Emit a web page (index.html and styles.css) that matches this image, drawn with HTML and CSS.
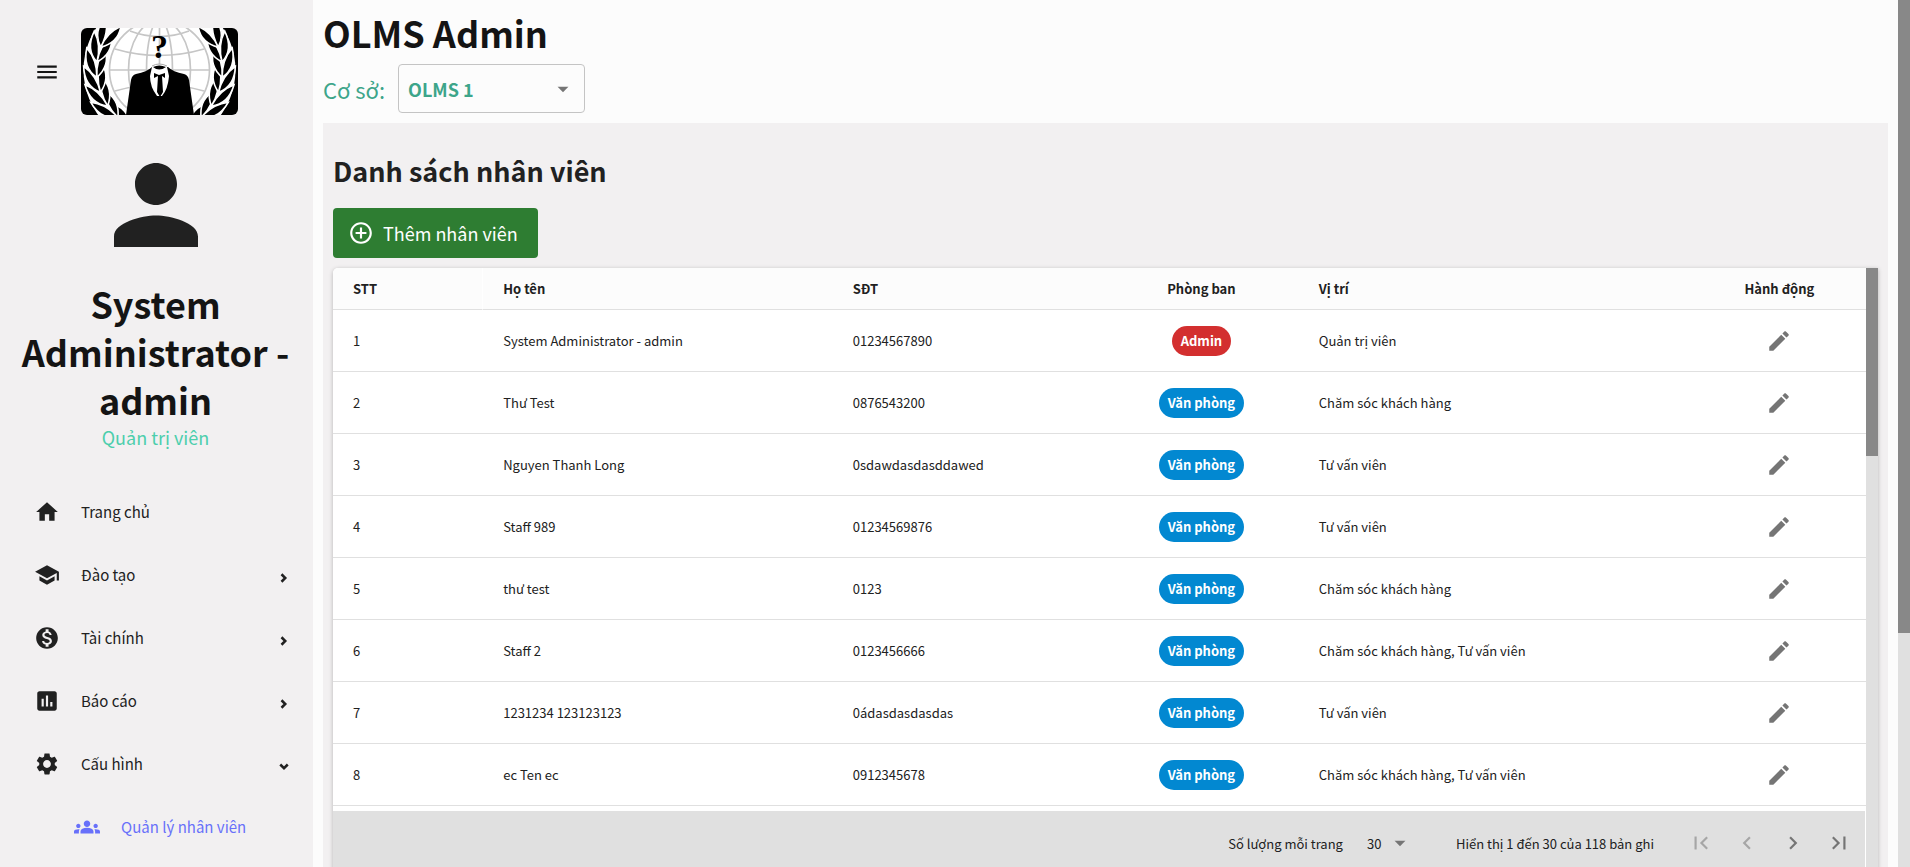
FILE: index.html
```html
<!DOCTYPE html>
<html lang="vi">
<head>
<meta charset="utf-8">
<title>OLMS Admin</title>
<link rel="stylesheet" href="styles.css">
</head>
<body>
<svg class="sprite" aria-hidden="true">
  <symbol id="menu" viewBox="0 0 24 24"><path d="M3 18h18v-2H3v2zm0-5h18v-2H3v2zm0-7v2h18V6H3z"/></symbol>
  <symbol id="person" viewBox="0 0 24 24"><path d="M12 12c2.21 0 4-1.79 4-4s-1.79-4-4-4-4 1.79-4 4 1.79 4 4 4zm0 2c-2.67 0-8 1.34-8 4v2h16v-2c0-2.66-5.33-4-8-4z"/></symbol>
  <symbol id="home" viewBox="0 0 24 24"><path d="M10 20v-6h4v6h5v-8h3L12 3 2 12h3v8z"/></symbol>
  <symbol id="school" viewBox="0 0 24 24"><path d="M5 13.18v4L12 21l7-3.82v-4L12 17l-7-3.82zM12 3 1 9l11 6 9-4.91V17h2V9L12 3z"/></symbol>
  <symbol id="money" viewBox="0 0 24 24"><path d="M12 2C6.48 2 2 6.48 2 12s4.48 10 10 10 10-4.48 10-10S17.52 2 12 2zm1.41 16.09V20h-2.67v-1.93c-1.71-.36-3.16-1.46-3.27-3.4h1.96c.1 1.05.82 1.87 2.65 1.87 1.96 0 2.4-.98 2.4-1.59 0-.83-.44-1.61-2.67-2.14-2.48-.6-4.18-1.62-4.18-3.67 0-1.72 1.39-2.84 3.11-3.21V4h2.67v1.95c1.86.45 2.79 1.86 2.85 3.39H14.3c-.05-1.11-.64-1.87-2.22-1.87-1.5 0-2.4.68-2.4 1.64 0 .84.65 1.39 2.67 1.91s4.18 1.39 4.18 3.91c-.01 1.83-1.38 2.83-3.12 3.16z"/></symbol>
  <symbol id="chart" viewBox="0 0 24 24"><path d="M19 3H5c-1.1 0-2 .9-2 2v14c0 1.1.9 2 2 2h14c1.1 0 2-.9 2-2V5c0-1.1-.9-2-2-2zM9 17H7v-7h2v7zm4 0h-2V7h2v10zm4 0h-2v-4h2v4z"/></symbol>
  <symbol id="gear" viewBox="0 0 24 24"><path d="M19.14 12.94c.04-.3.06-.61.06-.94 0-.32-.02-.64-.07-.94l2.03-1.58c.18-.14.23-.41.12-.61l-1.92-3.32c-.12-.22-.37-.29-.59-.22l-2.39.96c-.5-.38-1.03-.7-1.62-.94l-.36-2.54c-.04-.24-.24-.41-.48-.41h-3.84c-.24 0-.43.17-.47.41l-.36 2.54c-.59.24-1.13.57-1.62.94l-2.39-.96c-.22-.08-.47 0-.59.22L2.74 8.87c-.12.21-.08.47.12.61l2.03 1.58c-.05.3-.09.63-.09.94s.02.64.07.94l-2.03 1.58c-.18.14-.23.41-.12.61l1.92 3.32c.12.22.37.29.59.22l2.39-.96c.5.38 1.03.7 1.62.94l.36 2.54c.05.24.24.41.48.41h3.84c.24 0 .44-.17.47-.41l.36-2.54c.59-.24 1.13-.56 1.62-.94l2.39.96c.22.08.47 0 .59-.22l1.92-3.32c.12-.22.07-.47-.12-.61l-2.01-1.58zM12 15.6c-1.98 0-3.6-1.62-3.6-3.6s1.62-3.6 3.6-3.6 3.6 1.62 3.6 3.6-1.62 3.6-3.6 3.6z"/></symbol>
  <symbol id="groups" viewBox="0 0 24 24"><path d="M12 12.75c1.63 0 3.07.39 4.24.9 1.08.48 1.76 1.56 1.76 2.73V18H6v-1.61c0-1.18.68-2.26 1.76-2.73 1.17-.52 2.61-.91 4.24-.91zM4 13c1.1 0 2-.9 2-2s-.9-2-2-2-2 .9-2 2 .9 2 2 2zm1.13 1.1c-.37-.06-.74-.1-1.13-.1-.99 0-1.93.21-2.78.58C.48 14.9 0 15.62 0 16.43V18h4.5v-1.61c0-.83.23-1.61.63-2.29zM20 13c1.1 0 2-.9 2-2s-.9-2-2-2-2 .9-2 2 .9 2 2 2zm4 3.43c0-.81-.48-1.53-1.22-1.85-.85-.37-1.79-.58-2.78-.58-.39 0-.76.04-1.13.1.4.68.63 1.46.63 2.29V18H24v-1.57zM12 6c1.66 0 3 1.34 3 3s-1.34 3-3 3-3-1.34-3-3 1.34-3 3-3z"/></symbol>
  <symbol id="add" viewBox="0 0 24 24"><path d="M13 7h-2v4H7v2h4v4h2v-4h4v-2h-4V7zm-1-5C6.48 2 2 6.48 2 12s4.48 10 10 10 10-4.48 10-10S17.52 2 12 2zm0 18c-4.41 0-8-3.59-8-8s3.59-8 8-8 8 3.59 8 8-3.59 8-8 8z"/></symbol>
  <symbol id="edit" viewBox="0 0 24 24"><path d="M3 17.25V21h3.75L17.81 9.94l-3.75-3.75L3 17.25zM20.71 7.04c.39-.39.39-1.02 0-1.41l-2.34-2.34c-.39-.39-1.02-.39-1.41 0l-1.83 1.83 3.75 3.75 1.83-1.83z"/></symbol>
  <symbol id="caret" viewBox="0 0 24 24"><path d="m7 10 5 5 5-5z"/></symbol>
  <symbol id="chevron" viewBox="0 0 8 8"><path d="M2 1l3 3-3 3" fill="none" stroke="currentColor" stroke-width="2"/></symbol>
  <symbol id="first" viewBox="0 0 24 24"><path d="M18.41 16.59 13.82 12l4.59-4.59L17 6l-6 6 6 6zM6 6h2v12H6z"/></symbol>
  <symbol id="prev" viewBox="0 0 24 24"><path d="M15.41 7.41 14 6l-6 6 6 6 1.41-1.41L10.83 12z"/></symbol>
  <symbol id="next" viewBox="0 0 24 24"><path d="M10 6 8.59 7.41 13.17 12l-4.58 4.59L10 18l6-6z"/></symbol>
  <symbol id="last" viewBox="0 0 24 24"><path d="M5.59 7.41 10.18 12l-4.59 4.59L7 18l6-6-6-6zM16 6h2v12h-2z"/></symbol>
  <g id="leaf-pair"><path d="M0 3C-9-4-12-13-8-27C-2-19 1-9 0 3zM0 3C0-8 3-17 10-24C13-13 9-4 0 3z"/></g>
</svg>

<div class="app">
  <aside class="sidebar">
    <div class="brand">
      <button class="icon-button dark" type="button" aria-label="Menu"><svg class="icon"><use href="#menu"/></svg></button>
      <svg class="logo" viewBox="0 0 157 87" role="img" aria-label="Logo">
        <rect width="157" height="87"/>
        <circle cx="78.5" cy="42" r="76" fill="#fff"/>
        <g fill="none" stroke="#c6c6c6" stroke-width="1.7">
          <circle cx="78.5" cy="42" r="50"/>
          <ellipse cx="78.5" cy="42" rx="31" ry="50"/>
          <ellipse cx="78.5" cy="42" rx="13" ry="50"/>
          <path d="M78.5-8V92M28 42H129M34 21Q78 34 123 21M49 3Q78 14 108 3M34 63Q78 50 123 63"/>
        </g>
        <g id="laurel" stroke="#fff" stroke-width="1.6">
          <g transform="translate(78.5 42) rotate(-74) translate(-63 0)"><use href="#leaf-pair"/></g>
          <g transform="translate(78.5 42) rotate(-60) translate(-63 0)"><use href="#leaf-pair"/></g>
          <g transform="translate(78.5 42) rotate(-46) translate(-63 0)"><use href="#leaf-pair"/></g>
          <g transform="translate(78.5 42) rotate(-32) translate(-63 0)"><use href="#leaf-pair"/></g>
          <g transform="translate(78.5 42) rotate(-18) translate(-63 0)"><use href="#leaf-pair"/></g>
          <g transform="translate(78.5 42) rotate(-4) translate(-63 0)"><use href="#leaf-pair"/></g>
          <g transform="translate(78.5 42) rotate(10) translate(-63 0)"><use href="#leaf-pair"/></g>
          <g transform="translate(78.5 42) rotate(24) translate(-63 0)"><use href="#leaf-pair"/></g>
        </g>
        <use href="#laurel" transform="translate(157 0) scale(-1 1)"/>
        <path d="M45 87L50 52Q51 47 55 46Q66 44 71 39H87Q92 44 103 46Q107 47 108 52L113 87Z"/>
        <path d="M71 39Q78 34 86 39L88 48Q87 61 81 68H76Q69 59 69 48Z" fill="#fff"/>
        <path d="M72 39Q78 36 85 39Q78 44 72 39M73 45L78 47L84 45V50L81 48L82 64L79 69L76 64L77 48L73 50Z"/>
        <path d="M71 38Q78 34 86 38" fill="none" stroke="#aaa"/>
        <text class="logo-mark" x="78.5" y="30" text-anchor="middle">?</text>
      </svg>
    </div>
    <svg class="avatar"><use href="#person"/></svg>
    <h2 class="user-name">System Administrator - admin</h2>
    <p class="user-role">Quản trị viên</p>
    <nav class="nav">
      <a class="nav-item" href="#"><svg class="icon"><use href="#home"/></svg><span>Trang chủ</span></a>
      <a class="nav-item" href="#"><svg class="icon"><use href="#school"/></svg><span>Đào tạo</span><svg class="chevron"><use href="#chevron"/></svg></a>
      <a class="nav-item" href="#"><svg class="icon"><use href="#money"/></svg><span>Tài chính</span><svg class="chevron"><use href="#chevron"/></svg></a>
      <a class="nav-item" href="#"><svg class="icon"><use href="#chart"/></svg><span>Báo cáo</span><svg class="chevron"><use href="#chevron"/></svg></a>
      <a class="nav-item" href="#"><svg class="icon"><use href="#gear"/></svg><span>Cấu hình</span><svg class="chevron open"><use href="#chevron"/></svg></a>
      <a class="nav-item child" href="#"><svg class="icon"><use href="#groups"/></svg><span>Quản lý nhân viên</span></a>
    </nav>
  </aside>

  <main class="main">
    <h1 class="title">OLMS Admin</h1>
    <div class="branch-row">
      <label class="branch-label" for="campus">Cơ sở:</label>
      <span class="select-box campus"><select id="campus"><option>OLMS 1</option></select><svg class="icon"><use href="#caret"/></svg></span>
    </div>
    <section class="panel">
      <h2 class="panel-title">Danh sách nhân viên</h2>
      <button class="add-button" type="button"><svg class="icon"><use href="#add"/></svg>Thêm nhân viên</button>
      <div class="table-card">
        <div class="table-body">
          <table class="staff">
            <colgroup><col class="c-no"><col class="c-name"><col class="c-phone"><col class="c-dept"><col class="c-role"><col class="c-action"></colgroup>
            <thead><tr><th>STT</th><th>Họ tên</th><th>SĐT</th><th class="center">Phòng ban</th><th>Vị trí</th><th class="center">Hành động</th></tr></thead>
            <tbody>
              <tr><td>1</td><td>System Administrator - admin</td><td>01234567890</td><td class="center"><span class="chip red">Admin</span></td><td>Quản trị viên</td><td class="center"><button class="icon-button" type="button" aria-label="Sửa"><svg class="icon"><use href="#edit"/></svg></button></td></tr>
              <tr><td>2</td><td>Thư Test</td><td>0876543200</td><td class="center"><span class="chip">Văn phòng</span></td><td>Chăm sóc khách hàng</td><td class="center"><button class="icon-button" type="button" aria-label="Sửa"><svg class="icon"><use href="#edit"/></svg></button></td></tr>
              <tr><td>3</td><td>Nguyen Thanh Long</td><td>0sdawdasdasddawed</td><td class="center"><span class="chip">Văn phòng</span></td><td>Tư vấn viên</td><td class="center"><button class="icon-button" type="button" aria-label="Sửa"><svg class="icon"><use href="#edit"/></svg></button></td></tr>
              <tr><td>4</td><td>Staff 989</td><td>01234569876</td><td class="center"><span class="chip">Văn phòng</span></td><td>Tư vấn viên</td><td class="center"><button class="icon-button" type="button" aria-label="Sửa"><svg class="icon"><use href="#edit"/></svg></button></td></tr>
              <tr><td>5</td><td>thư test</td><td>0123</td><td class="center"><span class="chip">Văn phòng</span></td><td>Chăm sóc khách hàng</td><td class="center"><button class="icon-button" type="button" aria-label="Sửa"><svg class="icon"><use href="#edit"/></svg></button></td></tr>
              <tr><td>6</td><td>Staff 2</td><td>0123456666</td><td class="center"><span class="chip">Văn phòng</span></td><td>Chăm sóc khách hàng, Tư vấn viên</td><td class="center"><button class="icon-button" type="button" aria-label="Sửa"><svg class="icon"><use href="#edit"/></svg></button></td></tr>
              <tr><td>7</td><td>1231234 123123123</td><td>0ádasdasdasdas</td><td class="center"><span class="chip">Văn phòng</span></td><td>Tư vấn viên</td><td class="center"><button class="icon-button" type="button" aria-label="Sửa"><svg class="icon"><use href="#edit"/></svg></button></td></tr>
              <tr><td>8</td><td>ec Ten ec</td><td>0912345678</td><td class="center"><span class="chip">Văn phòng</span></td><td>Chăm sóc khách hàng, Tư vấn viên</td><td class="center"><button class="icon-button" type="button" aria-label="Sửa"><svg class="icon"><use href="#edit"/></svg></button></td></tr>
            </tbody>
          </table>
          <footer class="pager">
            <label for="page-size">Số lượng mỗi trang</label>
            <span class="select-box size"><select id="page-size"><option>30</option></select><svg class="icon"><use href="#caret"/></svg></span>
            <span>Hiển thị 1 đến 30 của 118 bản ghi</span>
            <div class="pager-buttons">
              <button class="icon-button" type="button" aria-label="Trang đầu" disabled><svg class="icon"><use href="#first"/></svg></button>
              <button class="icon-button" type="button" aria-label="Trang trước" disabled><svg class="icon"><use href="#prev"/></svg></button>
              <button class="icon-button" type="button" aria-label="Trang sau"><svg class="icon"><use href="#next"/></svg></button>
              <button class="icon-button" type="button" aria-label="Trang cuối"><svg class="icon"><use href="#last"/></svg></button>
            </div>
          </footer>
        </div>
        <div class="scrollbar"><div class="thumb table-thumb"></div></div>
      </div>
    </section>
  </main>
  <div class="scrollbar"><div class="thumb page-thumb"></div></div>
</div>
</body>
</html>
```
FILE: styles.css
```css
* { box-sizing: border-box; }
body {
  margin: 0;
  background: #fcfcfc;
  color: #212121;
  font-family: "Noto Sans CJK SC", "Noto Sans", sans-serif;
  font-size: 13px;
}
h1, h2, p { margin: 0; }
button, select { font: inherit; color: inherit; }
svg { display: block; fill: currentColor; }
.sprite { position: absolute; width: 0; height: 0; }
.icon { width: 26px; height: 26px; flex: none; }
.icon-button {
  display: inline-flex;
  padding: 10px;
  border: 0;
  background: none;
  color: #757575;
}
.icon-button.dark { color: #141414; }
.icon-button:disabled { color: #a6a6a6; }

.app { display: flex; height: 100vh; overflow: hidden; }

.sidebar {
  flex: none;
  display: flex;
  flex-direction: column;
  align-items: center;
  width: 313px;
  padding-right: 2px;
  background: #f2f0f1;
}
.brand {
  align-self: stretch;
  display: flex;
  align-items: center;
  gap: 11px;
  padding: 28px 24px 0;
}
.logo { width: 157px; height: 87px; border-radius: 6px; color: #000; }
.logo-mark { font: bold 34px "Liberation Serif", serif; }
.avatar { width: 126px; height: 126px; margin-top: 27px; color: #212121; }
.user-name {
  margin-top: 11px;
  padding: 0 16px;
  color: #141414;
  font-size: 36px;
  line-height: 48px;
  text-align: center;
}
.user-role { margin-top: 2px; color: #4cceac; font-size: 18px; line-height: 24px; }
.nav { align-self: stretch; padding-top: 31px; }
.nav-item {
  display: flex;
  align-items: center;
  gap: 21px;
  height: 63px;
  padding: 0 22px 0 34px;
  color: #212121;
  font-size: 15px;
  text-decoration: none;
}
.nav-item.child { padding-left: 74px; color: #6870fa; }
.chevron { width: 10px; height: 10px; margin: 6px 0 0 auto; }
.chevron.open { transform: rotate(90deg); }

.main { flex: 1; min-width: 0; padding: 8px 10px 0; }
.title { color: #141414; font-size: 36px; line-height: 48px; }
.branch-row { display: flex; align-items: center; gap: 13px; margin-top: 8px; }
.branch-label { color: #3da58a; font-size: 22px; line-height: 36px; }
.select-box { display: inline-grid; align-items: center; }
.select-box > * { grid-area: 1 / 1; }
.select-box > .icon { justify-self: end; color: #757575; pointer-events: none; }
.select-box select { appearance: none; border: 0; background: none; outline: 0; }
.campus { width: 187px; padding-right: 8px; border: 1px solid #c4c4c4; border-radius: 4px; }
.campus select { height: 47px; padding: 0 9px; color: #3da58a; font-size: 18px; font-weight: 700; }

.panel { margin-top: 10px; padding: 30px 10px; background: #f2f0f1; }
.panel-title { font-size: 27px; line-height: 36px; }
.add-button {
  display: flex;
  align-items: center;
  gap: 9px;
  height: 50px;
  margin-top: 19px;
  padding: 0 20px 0 15px;
  border: 0;
  border-radius: 4px;
  background: #2e7d32;
  color: #fff;
  font-size: 18px;
}
.table-card {
  display: flex;
  margin-top: 10px;
  border-radius: 5px 0 0 0;
  background: #fff;
  box-shadow: 0 1px 4px rgba(0, 0, 0, .25);
}
.table-body { flex: 1; min-width: 0; }
.staff { width: 100%; table-layout: fixed; border-collapse: separate; border-spacing: 0; }
.c-no { width: 9.8%; }
.c-name { width: 22.8%; }
.c-phone { width: 17.7%; }
.c-dept { width: 12.7%; }
.c-role { width: 25.7%; }
.c-action { width: 11.3%; }
.staff th, .staff td { padding: 0 20px; border-bottom: 1px solid #e0e0e0; text-align: left; }
.staff th { height: 42px; background: #fcfcfc; }
.staff th:first-child { border-top-left-radius: 5px; border-right: 1px solid #fff; }
.staff td { height: 62px; }
.staff .center { padding: 0; text-align: center; }
.staff .icon-button { vertical-align: middle; }
.chip {
  display: inline-block;
  padding: 0 9px;
  border-radius: 15px;
  background: #0288d1;
  color: #fff;
  font-weight: 700;
  line-height: 30px;
}
.chip.red { background: #d32f2f; }
.pager {
  display: flex;
  align-items: center;
  justify-content: flex-end;
  height: 64px;
  margin: 5px 1px 0 0;
  padding-right: 3px;
  background: #e0e0e0;
}
.size { width: 54px; margin: 0 43px 0 16px; }
.size select { padding: 0 8px; }
.pager-buttons { display: flex; margin-left: 24px; }

.scrollbar { flex: none; width: 12px; background: #e0e0e0; }
.thumb { background: #888; }
.table-thumb { height: 188px; }
.page-thumb { height: 73%; }
```
